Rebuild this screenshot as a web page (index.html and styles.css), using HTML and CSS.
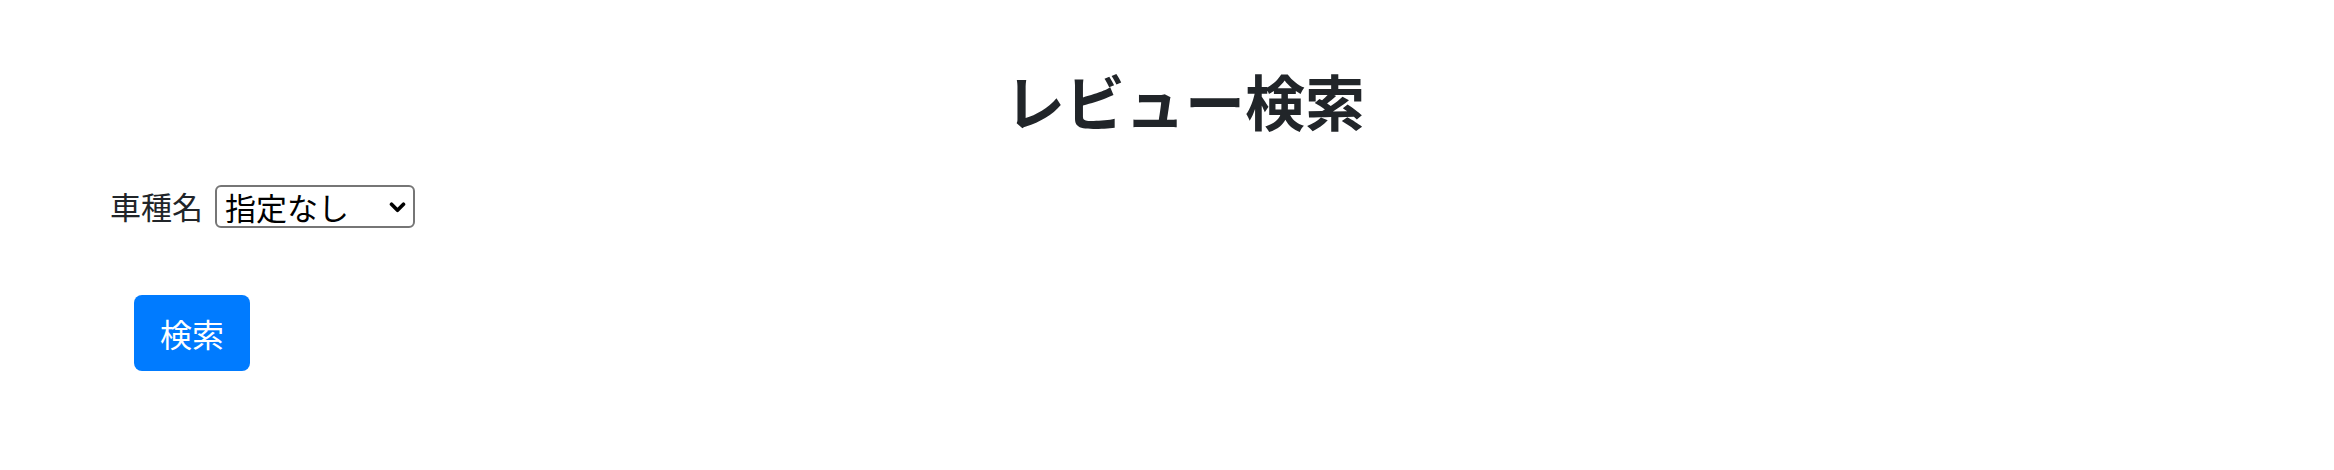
FILE: index.html
```html
<!DOCTYPE html>
<html lang="ja">
<head>
<meta charset="utf-8">
<title>レビュー検索</title>
<link rel="stylesheet" href="styles.css">
</head>
<body>
<main class="page">
  <h1 class="title">レビュー検索</h1>
  <form class="search-form">
    <div class="field">
      <label class="field-label" for="car">車種名</label>
      <div class="select-wrap">
        <select id="car" class="select">
          <option>指定なし</option>
        </select>
        <svg class="chevron" viewBox="0 0 18 12" width="17" height="11" aria-hidden="true">
          <path d="M2.5 2.5 L9 9 L15.5 2.5" fill="none" stroke="#000" stroke-width="4" stroke-linecap="round" stroke-linejoin="round"/>
        </svg>
      </div>
    </div>
    <div class="actions">
      <button type="button" class="btn">検索</button>
    </div>
  </form>
</main>
</body>
</html>
```

FILE: styles.css
```css
html, body {
  margin: 0;
  padding: 0;
  background: #fff;
}
body {
  font-family: "Noto Sans CJK JP", "Noto Sans", sans-serif;
  color: #212529;
}
.page {
  padding-top: 56px;
}
.title {
  margin: 0;
  padding-left: 36px;
  text-align: center;
  font-size: 60px;
  font-weight: 700;
  line-height: 88px;
  color: #212529;
}
.search-form {
  padding-left: 110px;
  margin-top: 40px;
}
.field {
  display: flex;
  align-items: center;
  gap: 12px;
}
.field-label {
  font-size: 31px;
  line-height: 44px;
}
.select-wrap {
  position: relative;
  width: 200px;
  height: 43px;
}
.select {
  appearance: none;
  -webkit-appearance: none;
  box-sizing: border-box;
  width: 200px;
  height: 43px;
  margin: 0;
  padding: 0 0 0 8px;
  border: 2px solid #767676;
  border-radius: 6px;
  background: #fff;
  color: #000;
  font-family: "Noto Sans CJK JP", sans-serif;
  font-size: 31px;
  line-height: 39px;
}
.chevron {
  position: absolute;
  right: 9px;
  top: 17px;
  pointer-events: none;
}
.actions {
  margin-top: 67px;
  padding-left: 24px;
}
.btn {
  box-sizing: border-box;
  width: 116px;
  height: 76px;
  padding: 0;
  border: 0;
  border-radius: 8px;
  background: #007bff;
  color: #fff;
  font-family: "Noto Sans CJK JP", sans-serif;
  font-size: 32px;
  line-height: 76px;
}
```
